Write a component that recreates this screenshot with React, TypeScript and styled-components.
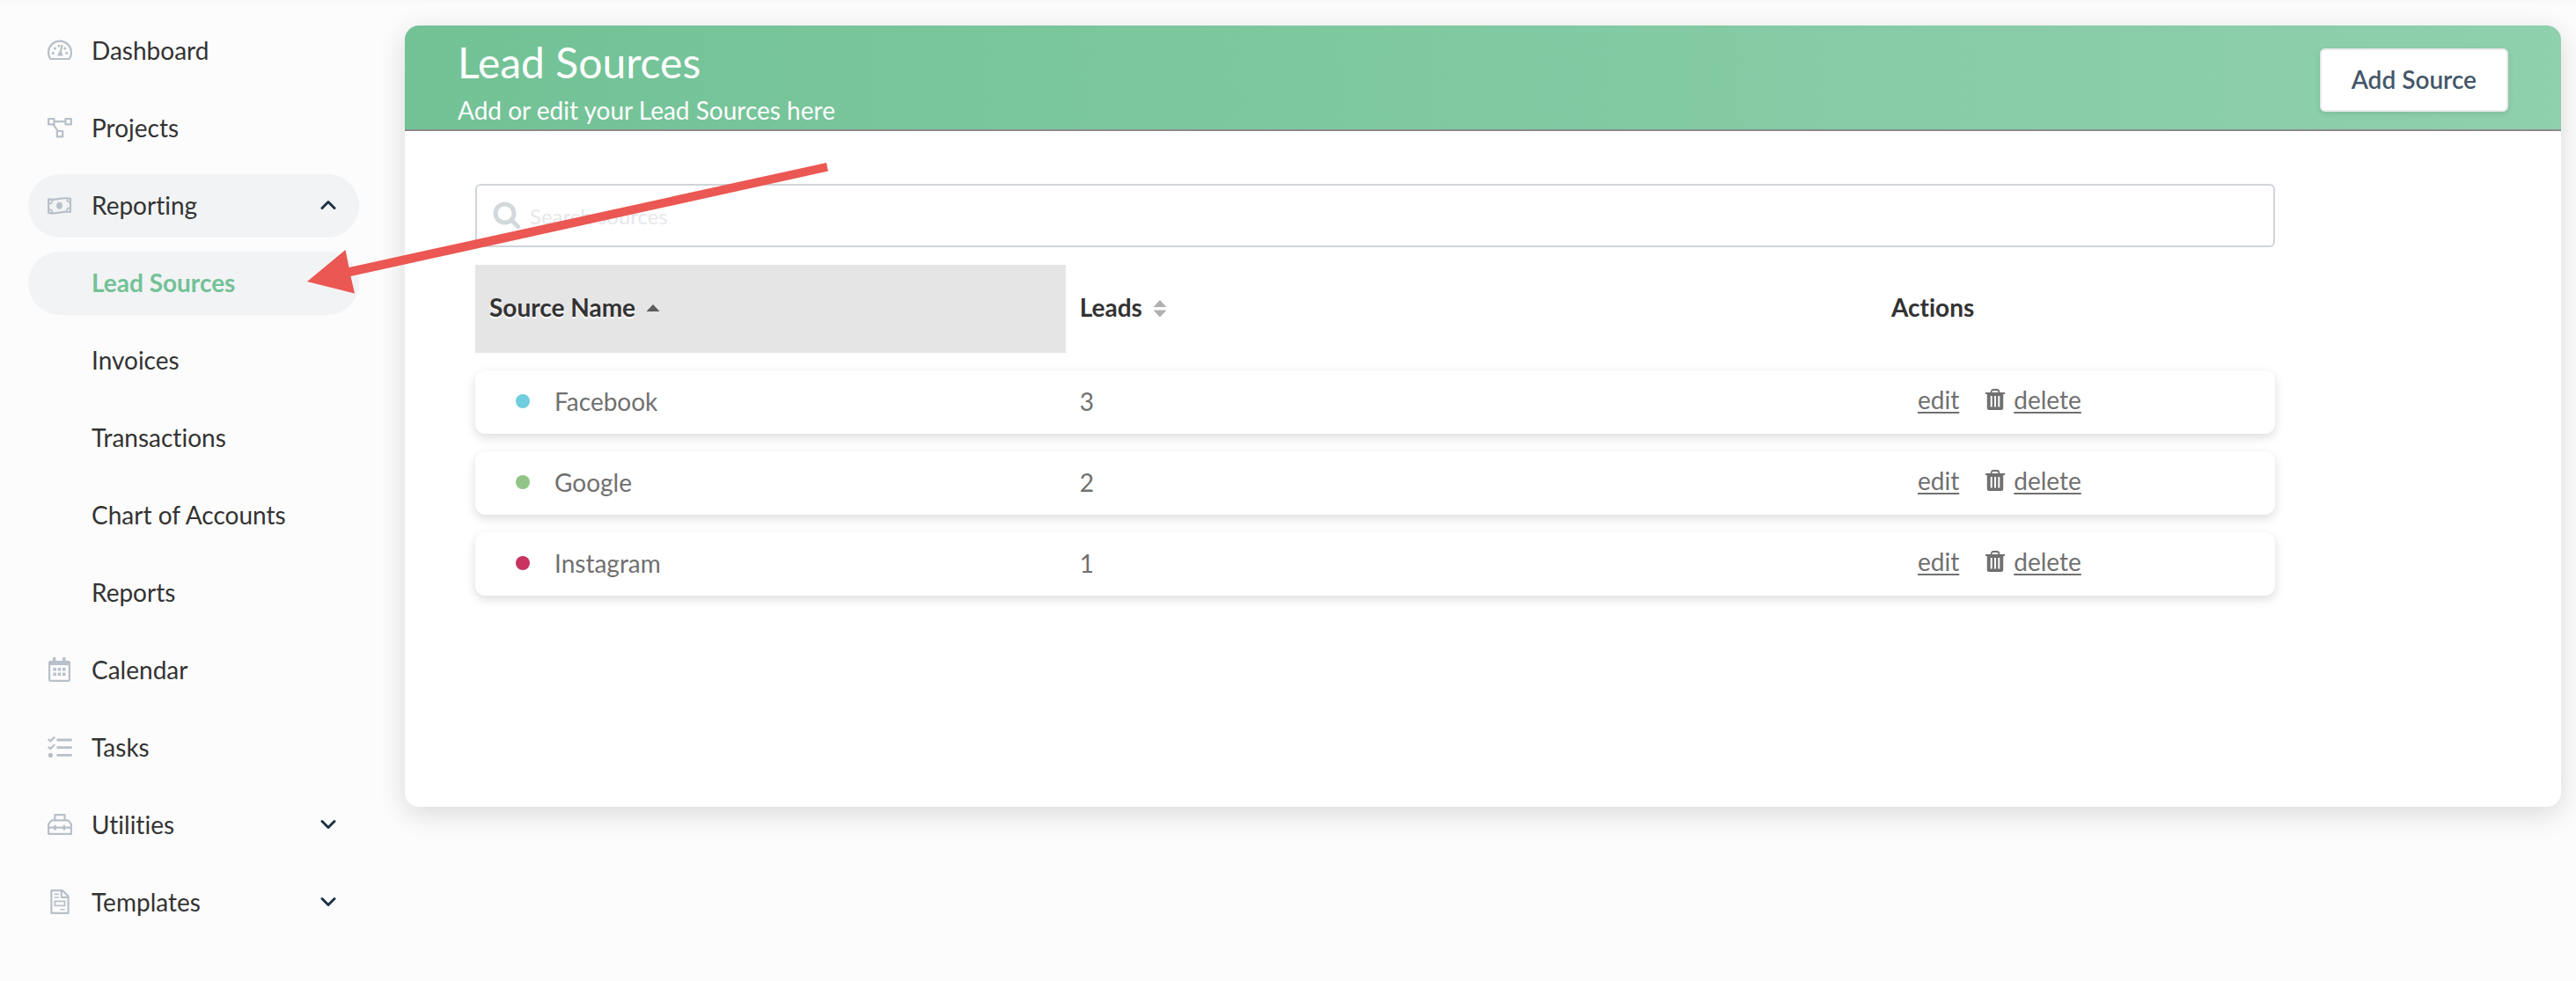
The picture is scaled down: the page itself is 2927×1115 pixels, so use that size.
import React, { useState } from 'react';
import styled, { createGlobalStyle } from 'styled-components';

const GlobalStyle = createGlobalStyle`
  *, *::before, *::after { box-sizing: border-box; }
  body {
    margin: 0;
    background: #fcfcfc;
    color: #333;
    font-family: Lato, "Open Sans", sans-serif;
    font-size: 28px;
    font-variant-ligatures: none;
    line-height: 36px;
  }
`;

const Page = styled.div`
  position: relative;
  display: flex;
  align-items: flex-start;
  min-height: 100vh;
  background: linear-gradient(#f7f7f7, #fcfcfc 6px);
`;

const Sidebar = styled.nav`
  flex: none;
  width: 460px;
  padding: 22px 52px 22px 32px;
`;

const NavList = styled.ul`
  display: flex;
  flex-direction: column;
  gap: 16px;
  margin: 0;
  padding: 0;
  list-style: none;
`;

const NavItem = styled.a<{ $filled?: boolean; $current?: boolean }>`
  display: flex;
  align-items: center;
  width: 100%;
  height: 72px;
  padding: 0 26px 2px 22px;
  border: 0;
  border-radius: 36px;
  background: ${(p) => (p.$filled ? '#f2f3f5' : 'transparent')};
  color: ${(p) => (p.$current ? '#72c296' : '#333')};
  font: inherit;
  font-weight: ${(p) => (p.$current ? 700 : 400)};
  text-align: left;
  text-decoration: none;
  cursor: pointer;
`;

const IconSlot = styled.span`
  flex: none;
  display: flex;
  width: 50px;
  color: #b8c0c9;
`;

const NavText = styled.span`
  flex: 1;
`;

const Main = styled.main`
  flex: 1;
  min-width: 0;
  padding: 29px 17px 40px 0;
`;

const Card = styled.section`
  min-height: 888px;
  border-radius: 16px;
  background: #fff;
  box-shadow: 0 8px 32px rgba(0, 0, 0, 0.14);
`;

const CardHeader = styled.header`
  display: flex;
  align-items: flex-start;
  justify-content: space-between;
  height: 120px;
  padding: 14px 60px 0;
  border-bottom: 2px solid #8a8a8a;
  border-radius: 16px 16px 0 0;
  background: linear-gradient(90deg, #72c296, #8fd0ad);
  color: #fff;
`;

const Title = styled.h1`
  margin: 0;
  font-size: 48px;
  font-weight: 400;
  line-height: 56px;
`;

const Subtitle = styled.p`
  margin: 8px 0 0;
  line-height: 36px;
`;

const AddButton = styled.button`
  height: 72px;
  margin-top: 12px;
  padding: 0 34px 2px;
  border: 2px solid #e9eaec;
  border-radius: 6px;
  background: #fff;
  box-shadow: 0 2px 6px rgba(0, 0, 0, 0.1);
  color: #44576a;
  font: inherit;
  font-weight: 600;
  cursor: pointer;
`;

const CardBody = styled.div`
  padding: 60px 325px 60px 80px;
`;

const SearchBox = styled.label`
  display: flex;
  align-items: center;
  gap: 10px;
  height: 72px;
  padding: 0 18px;
  border: 2px solid #d1d5da;
  border-radius: 6px;
  color: #d3d8db;
`;

const SearchInput = styled.input`
  flex: 1;
  min-width: 0;
  height: 100%;
  padding: 0;
  border: 0;
  outline: 0;
  background: transparent;
  color: #333;
  font: inherit;
  font-size: 24px;

  &::placeholder {
    color: #e6e8eb;
    opacity: 1;
  }
`;

const Table = styled.table`
  width: 100%;
  border-collapse: separate;
  border-spacing: 0 20px;
  table-layout: fixed;
`;

const Col = styled.col<{ $share: number }>`
  width: ${(p) => p.$share}%;
`;

const HeadCell = styled.th<{ $sorted?: boolean }>`
  height: 100px;
  padding: 0 16px 4px;
  background: ${(p) => (p.$sorted ? '#e5e5e5' : 'transparent')};
  font-weight: 700;
  text-align: left;
  text-shadow: ${(p) => (p.$sorted ? '0 2px 2px #fff' : 'none')};
`;

const SortButton = styled.button`
  display: flex;
  align-items: center;
  gap: 12px;
  padding: 0;
  border: 0;
  background: transparent;
  color: inherit;
  font: inherit;
  text-shadow: inherit;
  cursor: pointer;
`;

const Row = styled.tr`
  border-radius: 12px;
  box-shadow: 0 4px 12px rgba(0, 0, 0, 0.14);
  color: #707070;
`;

const Cell = styled.td`
  height: 72px;
  padding: 0 16px 2px;
  background: #fff;

  &:first-child { border-radius: 12px 0 0 12px; }
  &:last-child { border-radius: 0 12px 12px 0; }
`;

const SourceName = styled.span`
  display: flex;
  align-items: center;
  gap: 28px;
  padding-left: 30px;
`;

const Dot = styled.span<{ $color: string }>`
  width: 16px;
  height: 16px;
  border-radius: 50%;
  background: ${(p) => p.$color};
`;

const Actions = styled.span`
  display: flex;
  align-items: center;
  gap: 30px;
  padding: 0 0 4px 30px;
`;

const ActionGroup = styled.span`
  display: flex;
  align-items: center;
  gap: 10px;
`;

const ActionLink = styled.a`
  color: #707070;
  text-decoration: underline;
  text-decoration-thickness: 2px;
  text-underline-offset: 3px;
`;

const Pointer = styled.svg`
  position: absolute;
  top: 180px;
  left: 345px;
  pointer-events: none;
`;

const Glyph = ({ children }: { children: React.ReactNode }) => (
  <svg width="28" height="28" viewBox="0 0 28 28" fill="none" stroke="currentColor" strokeWidth="2.2" strokeLinejoin="round" aria-hidden="true">
    {children}
  </svg>
);

const DashboardIcon = () => (
  <Glyph>
    <path d="M3.3 24A13 13 0 1 1 24.7 24Z" />
    <path d="M16.4 8.8 14.6 17" strokeLinecap="round" />
    <g fill="currentColor" stroke="none">
      <path d="M13.2 15.6h2.8l1.6 4.8h-6.4z" />
      <circle cx="6.2" cy="17.3" r="1.6" />
      <circle cx="8.4" cy="12" r="1.6" />
      <circle cx="13" cy="9.2" r="1.4" />
      <circle cx="19.8" cy="12" r="1.5" />
      <circle cx="21.8" cy="17.3" r="1.6" />
    </g>
  </Glyph>
);

const ProjectsIcon = () => (
  <Glyph>
    <rect x="1.1" y="4" width="6.4" height="6.4" />
    <rect x="20.5" y="4" width="6.4" height="6.4" />
    <rect x="10.8" y="18" width="6.4" height="6.4" />
    <path d="M7.5 7.2h13M6.6 10.6l5.4 7.6" />
  </Glyph>
);

const MoneyIcon = () => (
  <Glyph>
    <path d="M1.1 7.4C9 9.6 15 4.4 26 6.8V22C17.6 20 12 25 1.1 22.8Z" />
    <ellipse cx="13.5" cy="14.7" rx="3.4" ry="4" fill="currentColor" stroke="none" />
    <path d="M2 12.4c2.2 0 3.4-1.4 3.6-3.4M2 18.8c2 .2 3.2 1.6 3.4 3.4M25 10.8c-1.8-.2-2.8-1.4-3-3.2M25 17.4c-2 0-3 1.4-3.2 3" strokeWidth="1.8" />
  </Glyph>
);

const CalendarIcon = () => (
  <Glyph>
    <rect x="2.1" y="5" width="22.8" height="21.9" rx="1.6" />
    <g fill="currentColor" stroke="none">
      <rect x="2" y="4" width="23" height="5" />
      <rect x="6" y="0" width="3.4" height="5" rx=".8" />
      <rect x="17.2" y="0" width="3.4" height="5" rx=".8" />
      <rect x="6.4" y="12" width="3.5" height="3.5" />
      <rect x="11.7" y="12" width="3.5" height="3.5" />
      <rect x="17" y="12" width="3.5" height="3.5" />
      <rect x="6.4" y="17.6" width="3.5" height="3.5" />
      <rect x="11.7" y="17.6" width="3.5" height="3.5" />
      <rect x="17" y="17.6" width="3.5" height="3.5" />
    </g>
  </Glyph>
);

const TasksIcon = () => (
  <Glyph>
    <path d="M.8 5 3.2 7.4 8.2 2.6M.8 13.7 3.2 16.1 8.2 11.3" />
    <path d="M10.5 6h17.2M10.5 14.7h17.2M10.5 23.4h17.2" strokeWidth="2.8" />
    <circle cx="3.4" cy="23.4" r="2.6" fill="currentColor" stroke="none" />
  </Glyph>
);

const ToolboxIcon = () => (
  <Glyph>
    <path d="M1.1 24.9V13.6L4.6 9.4H23.4L26.9 13.6V24.9Z" />
    <path d="M8.4 9V3.1H19.6V9M1 17.6H27" />
    <path d="M8.5 14.8v5.8M18.9 14.8v5.8" strokeWidth="2.6" />
  </Glyph>
);

const TemplateIcon = () => (
  <Glyph>
    <path d="M4.4 1.1H17L23.6 7.6V26.9H4.4Z" />
    <path d="M15.8 1.5V8.8H23" />
    <rect x="8.3" y="13.3" width="11.2" height="5" strokeWidth="1.8" />
    <path d="M7.6 5.4h5.2M7.6 9h5.2M14.4 22.7h5.2" strokeWidth="1.6" />
  </Glyph>
);

const Chevron = ({ up }: { up: boolean }) => (
  <svg width="18" height="12" viewBox="0 0 18 12" fill="none" stroke="#1f3347" strokeWidth="3" strokeLinecap="round" strokeLinejoin="round" aria-hidden="true">
    <path d={up ? 'M2 9.5 9 2.5 16 9.5' : 'M2 2.5 9 9.5 16 2.5'} />
  </svg>
);

const SearchIcon = () => (
  <svg width="32" height="32" viewBox="0 0 32 32" fill="none" stroke="currentColor" strokeWidth="5" strokeLinecap="round" aria-hidden="true">
    <circle cx="13.5" cy="13.5" r="10.5" />
    <path d="M21.5 21.5 28.5 28.5" />
  </svg>
);

const SortMark = ({ sorted }: { sorted: boolean }) => (
  <svg width="16" height="24" viewBox="0 0 16 24" fill={sorted ? '#5c5c5c' : '#b0b0b0'} aria-hidden="true">
    {sorted ? (
      <path d="M8 9 15.5 17H.5z" />
    ) : (
      <path d="M8 4 15.5 12H.5zM8 23.500.5 15.5h15z" />
    )}
  </svg>
);

const TrashIcon = () => (
  <svg width="22" height="24" viewBox="0 0 22 24" aria-hidden="true">
    <path d="M6.5 4.5C6.5 2 7.5 1 9 1h4c1.5 0 2.5 1 2.5 3.5" fill="none" stroke="#707070" strokeWidth="1.8" />
    <path
      fill="#707070"
      fillRule="evenodd"
      d="M0 4h22v2h-1.8v15.5q0 2.5-2.5 2.5H4.3q-2.5 0-2.5-2.5V6H0zM5.7 8v12.5h2V8zM10 8v12.5h2V8zM14.3 8v12.5h2V8z"
    />
  </svg>
);

const sources = [
  { name: 'Facebook', leads: 3, color: '#70cddd' },
  { name: 'Google', leads: 2, color: '#90c587' },
  { name: 'Instagram', leads: 1, color: '#c83360' },
];

const reportingPages = ['Lead Sources', 'Invoices', 'Transactions', 'Chart of Accounts', 'Reports'];

type LinkProps = {
  text: string;
  icon?: React.ReactNode;
  current?: boolean;
};

const NavLink = ({ text, icon, current }: LinkProps) => (
  <li>
    <NavItem href="#" $filled={current} $current={current} aria-current={current ? 'page' : undefined}>
      <IconSlot>{icon}</IconSlot>
      <NavText>{text}</NavText>
    </NavItem>
  </li>
);

type GroupProps = {
  text: string;
  icon: React.ReactNode;
  open: boolean;
  onToggle: () => void;
};

const NavGroup = ({ text, icon, open, onToggle }: GroupProps) => (
  <li>
    <NavItem as="button" type="button" $filled={open} aria-expanded={open} onClick={onToggle}>
      <IconSlot>{icon}</IconSlot>
      <NavText>{text}</NavText>
      <Chevron up={open} />
    </NavItem>
  </li>
);

export default function App() {
  const [open, setOpen] = useState<Record<string, boolean>>({ reporting: true });
  const [query, setQuery] = useState('');
  const toggle = (key: string) => setOpen((o) => ({ ...o, [key]: !o[key] }));
  const shown = sources.filter((s) => s.name.toLowerCase().includes(query.toLowerCase()));

  return (
    <>
      <GlobalStyle />
      <Page>
        <Sidebar aria-label="Main">
          <NavList>
            <NavLink text="Dashboard" icon={<DashboardIcon />} />
            <NavLink text="Projects" icon={<ProjectsIcon />} />
            <NavGroup text="Reporting" icon={<MoneyIcon />} open={!!open.reporting} onToggle={() => toggle('reporting')} />
            {open.reporting &&
              reportingPages.map((page) => <NavLink key={page} text={page} current={page === 'Lead Sources'} />)}
            <NavLink text="Calendar" icon={<CalendarIcon />} />
            <NavLink text="Tasks" icon={<TasksIcon />} />
            <NavGroup text="Utilities" icon={<ToolboxIcon />} open={!!open.utilities} onToggle={() => toggle('utilities')} />
            <NavGroup text="Templates" icon={<TemplateIcon />} open={!!open.templates} onToggle={() => toggle('templates')} />
          </NavList>
        </Sidebar>

        <Main>
          <Card>
            <CardHeader>
              <div>
                <Title>Lead Sources</Title>
                <Subtitle>Add or edit your Lead Sources here</Subtitle>
              </div>
              <AddButton type="button">Add Source</AddButton>
            </CardHeader>
            <CardBody>
              <SearchBox>
                <SearchIcon />
                <SearchInput
                  type="text"
                  aria-label="Search sources"
                  placeholder="Search sources"
                  value={query}
                  onChange={(e) => setQuery(e.target.value)}
                />
              </SearchBox>
              <Table>
                <colgroup>
                  <Col $share={32.8} />
                  <Col $share={45.1} />
                  <Col $share={22.1} />
                </colgroup>
                <thead>
                  <tr>
                    <HeadCell $sorted scope="col" aria-sort="ascending">
                      <SortButton type="button">
                        Source Name
                        <SortMark sorted />
                      </SortButton>
                    </HeadCell>
                    <HeadCell scope="col">
                      <SortButton type="button">
                        Leads
                        <SortMark sorted={false} />
                      </SortButton>
                    </HeadCell>
                    <HeadCell scope="col">Actions</HeadCell>
                  </tr>
                </thead>
                <tbody>
                  {shown.map((s) => (
                    <Row key={s.name}>
                      <Cell>
                        <SourceName>
                          <Dot $color={s.color} />
                          {s.name}
                        </SourceName>
                      </Cell>
                      <Cell>{s.leads}</Cell>
                      <Cell>
                        <Actions>
                          <ActionLink href="#">edit</ActionLink>
                          <ActionGroup>
                            <TrashIcon />
                            <ActionLink href="#">delete</ActionLink>
                          </ActionGroup>
                        </Actions>
                      </Cell>
                    </Row>
                  ))}
                </tbody>
              </Table>
            </CardBody>
          </Card>
        </Main>

        <Pointer width="600" height="160" viewBox="345 180 600 160" fill="#eb5752" aria-hidden="true">
          <path d="M349 320 392.5 284 396.5 304 939 185 941 194.5 398.5 314 403 333.5Z" />
        </Pointer>
      </Page>
    </>
  );
}
